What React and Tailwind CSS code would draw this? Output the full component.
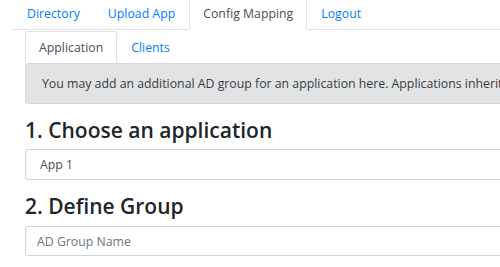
const App = () => {
  const topTabs = ['Directory', 'Upload App', 'Config Mapping', 'Logout'];

  return (
    <div className="w-[500px] h-[267px] overflow-hidden bg-white font-['Open_Sans',sans-serif] text-[12.3px] leading-[19px] text-[#212529]">
      <div className="w-[760px] pl-[13px] -mt-[4px]">
        {/* Top nav tabs */}
        <ul className="flex border-b border-[#dee2e6]">
          {topTabs.map((t) => (
            <li key={t} className="-mb-px">
              {t === 'Config Mapping' ? (
                <span className="block px-[13px] py-[6.5px] border border-[#dee2e6] border-b-white rounded-t-[3px] bg-white text-[#495057]">
                  {t}
                </span>
              ) : (
                <span className="block px-[13px] py-[6.5px] border border-transparent text-[#007bff]">
                  {t}
                </span>
              )}
            </li>
          ))}
        </ul>

        <div className="pl-[12px] pt-[1px]">
          {/* Sub tabs */}
          <ul className="flex">
            <li>
              <span className="block px-[13px] py-[5.5px] border border-[#dee2e6] border-b-white rounded-t-[3px] text-[#495057]">
                Application
              </span>
            </li>
            <li>
              <span className="block px-[13px] py-[5.5px] border border-transparent text-[#007bff]">
                Clients
              </span>
            </li>
          </ul>

          {/* Info alert */}
          <div className="mb-[13px] px-[16px] py-[10px] bg-[#e2e3e5] border border-[#d6d8db] rounded-[3px] text-[#383d41] whitespace-nowrap">
            You may add an additional AD group for an application here. Applications inherit the groups of their parent directory.
          </div>

          {/* Step 1 */}
          <div className="mb-[13px]">
            <h3 className="mb-[5px] text-[21px] leading-[27px] font-semibold text-[#212529]">1. Choose an application</h3>
            <div className="h-[31px] pl-[14px] flex items-center border border-[#ced4da] rounded-[3px] text-[#495057]">
              App 1
            </div>
          </div>

          {/* Step 2 */}
          <div>
            <h3 className="mb-[6px] text-[21px] leading-[27px] font-semibold text-[#212529]">2. Define Group</h3>
            <input
              type="text"
              placeholder="AD Group Name"
              className="block w-full h-[30px] px-[11px] border border-[#ced4da] rounded-[3px] text-[#495057] placeholder:text-[#6c757d] outline-none"
            />
          </div>
        </div>
      </div>
    </div>
  );
};

export default App;
